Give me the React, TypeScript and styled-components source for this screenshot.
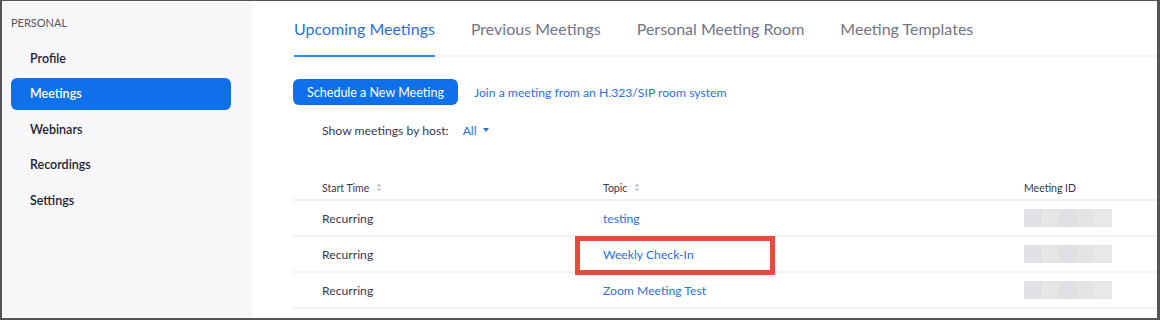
import React from "react";
import styled, { createGlobalStyle } from "styled-components";

const GlobalStyle = createGlobalStyle`
    body {
        margin: 0;
        font-family: Lato, "Open Sans", sans-serif;
        background: #ffffff;
    }
`;

const sideItems = ["Profile", "Meetings", "Webinars", "Recordings", "Settings"];
const tabs = ["Upcoming Meetings", "Previous Meetings", "Personal Meeting Room", "Meeting Templates"];
const rows = [
    { time: "Recurring", topic: "testing", marked: false },
    { time: "Recurring", topic: "Weekly Check-In", marked: true },
    { time: "Recurring", topic: "Zoom Meeting Test", marked: false },
];

const SortIcon = () => (
    <SortSvg width="6" height="9" viewBox="0 0 6 9">
        <path d="M3 0.5 L5.5 3.5 H0.5 Z" fill="#c4c4cc" />
        <path d="M3 8.5 L5.5 5.5 H0.5 Z" fill="#c4c4cc" />
    </SortSvg>
);

const App = () => {
    return (
        <>
            <GlobalStyle />
            <Frame>
                <Sidebar>
                    <SectionTitle>Personal</SectionTitle>
                    {sideItems.map((item) => (
                        <SideItem key={item} active={item === "Meetings"}>
                            {item}
                        </SideItem>
                    ))}
                </Sidebar>
                <Main>
                    <Tabs>
                        {tabs.map((tab, index) => (
                            <Tab key={tab} active={index === 0}>
                                {tab}
                            </Tab>
                        ))}
                    </Tabs>
                    <Actions>
                        <PrimaryButton>Schedule a New Meeting</PrimaryButton>
                        <Link>Join a meeting from an H.323/SIP room system</Link>
                    </Actions>
                    <Filter>
                        Show meetings by host:
                        <FilterValue>
                            All
                            <Caret />
                        </FilterValue>
                    </Filter>
                    <Table>
                        <HeadRow>
                            <HeadCell>
                                Start Time <SortIcon />
                            </HeadCell>
                            <HeadCell>
                                Topic <SortIcon />
                            </HeadCell>
                            <HeadCell>Meeting ID</HeadCell>
                        </HeadRow>
                        {rows.map((row, index) => (
                            <Row key={index}>
                                <Cell>{row.time}</Cell>
                                <Cell>
                                    <TopicLink>{row.topic}</TopicLink>
                                    {row.marked && <Highlight />}
                                </Cell>
                                <Cell>
                                    <Blurred>
                                        <BlurBlock shade="#e1e0e4" />
                                        <BlurBlock shade="#e6e6e9" />
                                        <BlurBlock shade="#e0dfe4" />
                                        <BlurBlock shade="#e4e4e7" />
                                        <BlurBlock shade="#e8e8eb" />
                                    </Blurred>
                                </Cell>
                            </Row>
                        ))}
                    </Table>
                </Main>
            </Frame>
        </>
    );
};

export default App;

const Frame = styled.div`
    box-sizing: border-box;
    width: 1160px;
    height: 320px;
    display: flex;
    border-style: solid;
    border-color: #555555;
    border-width: 1px 3px 2px 2px;
    overflow: hidden;
`;

const Sidebar = styled.div`
    width: 250px;
    flex-shrink: 0;
    background-color: #f7f7fa;
    padding: 15px 0 0 9px;
    box-sizing: border-box;
`;

const SectionTitle = styled.div`
    font-size: 11px;
    color: #555560;
    text-transform: uppercase;
    line-height: 14px;
    padding-bottom: 12px;
`;

const SideItem = styled.div<{ active?: boolean }>`
    width: 220px;
    height: 32px;
    box-sizing: border-box;
    padding-left: 19px;
    margin-bottom: 3.6px;
    display: flex;
    align-items: center;
    font-size: 12.5px;
    font-weight: 600;
    color: ${(props) => (props.active ? "#ffffff" : "#232333")};
    background-color: ${(props) => (props.active ? "#0e71eb" : "transparent")};
    border-radius: 6px;
`;

const Main = styled.div`
    flex: 1;
    padding-left: 41px;
    background: #ffffff;
`;

const Tabs = styled.div`
    display: flex;
    gap: 36px;
    height: 56px;
    border-bottom: 2px solid #f2f2f4;
    box-sizing: border-box;
    padding-left: 1px;
`;

const Tab = styled.div<{ active?: boolean }>`
    font-size: 16px;
    line-height: 56px;
    height: 56px;
    box-sizing: border-box;
    color: ${(props) => (props.active ? "#2d6fdc" : "#747487")};
    border-bottom: 2px solid ${(props) => (props.active ? "#2d8cff" : "transparent")};
    margin-bottom: -2px;
`;

const Actions = styled.div`
    display: flex;
    align-items: center;
    gap: 16px;
    margin-top: 22px;
`;

const PrimaryButton = styled.button`
    height: 26px;
    width: 165px;
    border: none;
    border-radius: 6px;
    background-color: #0e71eb;
    color: #ffffff;
    font-family: Lato, sans-serif;
    font-size: 12.5px;
    padding: 0;
`;

const Link = styled.span`
    font-size: 12.2px;
    color: #2d6fdc;
`;

const Filter = styled.div`
    display: flex;
    align-items: center;
    margin: 17px 0 0 29px;
    font-size: 12.2px;
    color: #39394d;
    height: 16px;
`;

const FilterValue = styled.span`
    display: inline-flex;
    align-items: center;
    gap: 6px;
    margin-left: 14px;
    color: #2d6fdc;
`;

const Caret = styled.span`
    width: 0;
    height: 0;
    border-left: 3.5px solid transparent;
    border-right: 3.5px solid transparent;
    border-top: 4px solid #2d6fdc;
`;

const Table = styled.div`
    margin-top: 38px;
`;

const HeadRow = styled.div`
    display: grid;
    grid-template-columns: 281px 421px 1fr;
    padding-left: 29px;
    height: 23px;
    align-items: center;
    border-bottom: 2px solid #f0f0f2;
`;

const HeadCell = styled.div`
    display: flex;
    align-items: center;
    gap: 7px;
    font-size: 10.5px;
    color: #39394d;
`;

const SortSvg = styled.svg`
    display: block;
`;

const Row = styled.div`
    display: grid;
    grid-template-columns: 281px 421px 1fr;
    padding-left: 29px;
    height: 36px;
    box-sizing: border-box;
    align-items: center;
    border-bottom: 2px solid #f2f2f4;
`;

const Cell = styled.div`
    position: relative;
    font-size: 12.2px;
    color: #39394d;
`;

const TopicLink = styled.span`
    color: #2d6fdc;
`;

const Highlight = styled.div`
    position: absolute;
    left: -28px;
    top: -11px;
    width: 200px;
    height: 39px;
    box-sizing: border-box;
    border: 5px solid #e8493f;
`;

const Blurred = styled.div`
    display: flex;
    width: 88px;
    height: 18px;
`;

const BlurBlock = styled.div<{ shade: string }>`
    flex: 1;
    background-color: ${(props) => props.shade};
`;
